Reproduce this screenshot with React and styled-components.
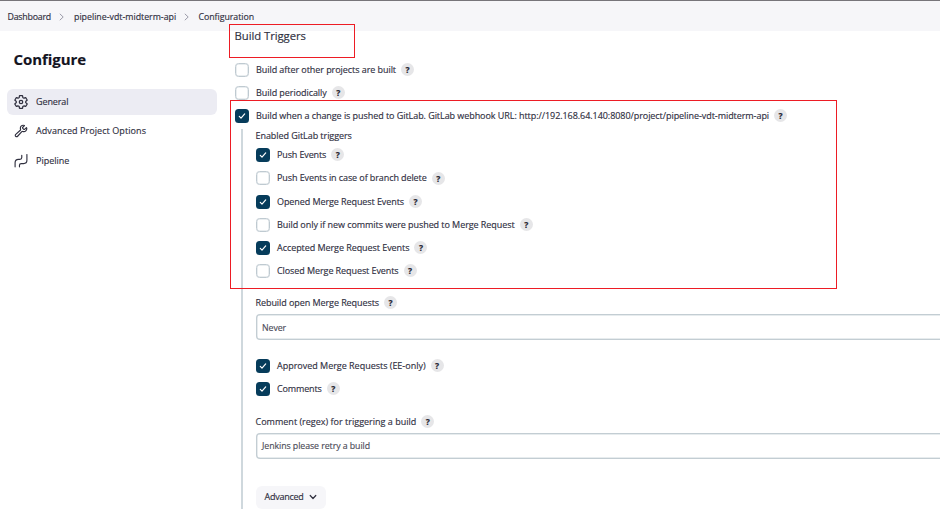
import React from "react";
import styled, { createGlobalStyle } from "styled-components";

const GlobalStyle = createGlobalStyle`
  * { box-sizing: border-box; }
  body {
    margin: 0;
    overflow: hidden;
    background: #fff;
    color: #30303f;
    font: 500 9px/12px "Open Sans", "Noto Sans", sans-serif;
    letter-spacing: -0.06px;
    -webkit-text-stroke: 0.15px;
  }
`;

const Page = styled.div`
  position: relative;
  width: 940px;
  height: 512px;
  overflow: hidden;
`;

const Header = styled.nav`
  display: flex;
  align-items: center;
  height: 31px;
  padding: 2px 7.5px 0;
  border-top: 1px solid #77757a;
  background: #f6f6f9;
`;

const Crumb = styled.span`
  width: ${(p) => p.$width}px;
  white-space: nowrap;
  font-size: 8.8px;
  letter-spacing: ${(p) => p.$spacing}px;
`;

const CrumbArrow = styled.svg`
  width: 5px;
  height: 8px;
  margin: 0 ${(p) => p.$after}px 0 8px;
  fill: none;
  stroke: #9c9caa;
  stroke-width: 1;
`;

const Body = styled.div`
  display: flex;
  height: 481px;
`;

const Sidebar = styled.aside`
  flex: none;
  width: 234.5px;
  padding: 17px 18px 0 6.5px;
`;

const SidebarTitle = styled.h1`
  margin: 0 0 19px 7px;
  color: #14141f;
  font-size: 15px;
  line-height: 22px;
  font-weight: 700;
  letter-spacing: -0.05px;
`;

const NavItem = styled.a`
  display: flex;
  align-items: center;
  width: 210px;
  height: 26px;
  margin-bottom: 3.4px;
  padding-left: 7px;
  gap: 8.5px;
  border-radius: 6px;
  background: ${(p) => (p.$active ? "#ececf3" : "transparent")};
  letter-spacing: ${(p) => p.$spacing || 0}px;
`;

const NavIcon = styled.svg`
  width: 14px;
  height: 14px;
  fill: none;
  stroke: #30303f;
  stroke-width: 42;
  stroke-linecap: round;
  stroke-linejoin: round;
`;

const Main = styled.main`
  flex: 1;
  min-width: 0;
`;

const SectionTitle = styled.h2`
  margin: 0;
  height: 27px;
  font-size: 11.3px;
  line-height: 10px;
  font-weight: 500;
  letter-spacing: -0.05px;
`;

const Row = styled.div`
  display: flex;
  align-items: center;
  height: ${(p) => p.$height || 23.15}px;
  white-space: nowrap;
  letter-spacing: ${(p) => p.$spacing ?? -0.06}px;
`;

const Box = styled.span`
  display: flex;
  align-items: center;
  justify-content: center;
  flex: none;
  width: 14px;
  height: 14px;
  margin-right: 7.5px;
  border-radius: 3.5px;
  border: ${(p) => (p.$checked ? "0" : "1px solid #bfcad1")};
  box-shadow: ${(p) => (p.$checked ? "none" : "inset 0 0 0 0.5px #d5dde1")};
  background: ${(p) => (p.$checked ? "#063c5b" : "#fff")};

  svg {
    width: 8px;
    height: 8px;
    fill: none;
    stroke: #fff;
    stroke-width: 1.2;
    stroke-linecap: round;
    stroke-linejoin: round;
  }
`;

const HelpBadge = styled.span`
  display: flex;
  align-items: center;
  justify-content: center;
  flex: none;
  width: 13px;
  height: 13px;
  margin: -0.6px 0 0 5px;
  border-radius: 50%;
  background: #e6e6e8;
  color: #22222e;
  font-size: 8.5px;
  font-weight: 700;
  line-height: 13px;
`;

const Nested = styled.div`
  height: 380px;
  margin: 1.5px 0 0 6.5px;
  padding-left: 12.5px;
  border-left: 2px solid #cfd8dd;
`;

const GroupLabel = styled.div`
  height: 14.8px;
  line-height: 14px;
  white-space: nowrap;
`;

const Field = styled.div`
  display: flex;
  align-items: center;
  height: 26px;
  padding: 1px 0 0 5.5px;
  border: solid #c3cdd3;
  border-width: 1px 0 1px 1px;
  box-shadow: inset 0.5px 0 0 #d0d9dd, inset 0 -0.5px 0 #d0d9dd, inset 0 0.5px 0 #d0d9dd;
  border-radius: 4px 0 0 4px;
  color: #4c4c58;
  font-size: 8.8px;
  font-weight: 400;
  letter-spacing: -0.07px;
`;

const Group = styled.section`
  margin-top: ${(p) => p.$top}px;
`;

const AdvancedButton = styled.button`
  display: flex;
  align-items: center;
  width: 70px;
  height: 23px;
  margin-top: 27px;
  padding: 0 0 0 9px;
  gap: 5px;
  border: 0;
  border-radius: 6px;
  background: #f6f6f9;
  color: inherit;
  font: inherit;
  letter-spacing: -0.25px;

  svg {
    width: 8px;
    height: 8px;
    fill: none;
    stroke: #30303f;
    stroke-width: 1.2;
    stroke-linecap: round;
    stroke-linejoin: round;
  }
`;

const Highlight = styled.div`
  position: absolute;
  left: ${(p) => p.$x}px;
  top: ${(p) => p.$y}px;
  width: ${(p) => p.$width}px;
  height: ${(p) => p.$height}px;
  border: 1px solid #ed1c24;
  pointer-events: none;
`;

const Help = () => <HelpBadge>?</HelpBadge>;

const Separator = ({ after }) => (
  <CrumbArrow viewBox="0 0 5 8" $after={after}>
    <path d="M.8.8 4.2 4 .8 7.2" />
  </CrumbArrow>
);

const CheckRow = ({ label, checked, height, spacing }) => (
  <Row $height={height} $spacing={spacing}>
    <Box $checked={checked}>
      {checked && (
        <svg viewBox="0 0 8 8">
          <path d="M1.3 4.4 3 6.1 6.7 1.9" />
        </svg>
      )}
    </Box>
    {label}
    <Help />
  </Row>
);

const EVENTS = [
  { label: "Push Events", checked: true, spacing: -0.13 },
  { label: "Push Events in case of branch delete", spacing: -0.09 },
  { label: "Opened Merge Request Events", checked: true, spacing: -0.08 },
  { label: "Build only if new commits were pushed to Merge Request" },
  { label: "Accepted Merge Request Events", checked: true },
  { label: "Closed Merge Request Events", spacing: -0.08 },
];

export default function App() {
  return (
    <Page>
      <GlobalStyle />
      <Header>
        <Crumb $width={43.5} $spacing={-0.21}>Dashboard</Crumb>
        <Separator after={10} />
        <Crumb $width={102} $spacing={0}>pipeline-vdt-midterm-api</Crumb>
        <Separator after={9.5} />
        <Crumb $width={56} $spacing={-0.04}>Configuration</Crumb>
      </Header>
      <Body>
        <Sidebar>
          <SidebarTitle>Configure</SidebarTitle>
          <NavItem $active $spacing={-0.1}>
            <NavIcon viewBox="0 0 512 512">
              <g transform="translate(-20 -20) scale(1.08)">
                <circle cx="256" cy="256" r="58" />
                <path d="M416.39 256a154.34 154.34 0 01-1.53 20.79l45.21 35.46a10.81 10.81 0 012.45 13.75l-42.77 74a10.81 10.81 0 01-13.14 4.59l-44.9-18.08a16.11 16.11 0 00-15.17 1.75A164.48 164.48 0 01325 400.8a15.94 15.94 0 00-8.82 12.14l-6.73 47.89a11.08 11.08 0 01-10.68 9.17h-85.54a11.11 11.11 0 01-10.69-8.87l-6.72-47.82a16.07 16.07 0 00-9-12.22 155.3 155.3 0 01-21.46-12.57 16 16 0 00-15.11-1.71l-44.89 18.07a10.81 10.81 0 01-13.14-4.58l-42.77-74a10.8 10.8 0 012.45-13.75l38.21-30a16.05 16.05 0 006-14.08c-.36-4.17-.58-8.33-.58-12.5s.21-8.27.58-12.35a16 16 0 00-6.07-13.94l-38.19-30A10.81 10.81 0 0149.48 186l42.77-74a10.81 10.81 0 0113.14-4.59l44.9 18.08a16.11 16.11 0 0015.17-1.75A164.48 164.48 0 01187 111.2a15.94 15.94 0 008.82-12.14l6.73-47.89A11.08 11.08 0 01213.23 42h85.54a11.11 11.11 0 0110.69 8.87l6.72 47.82a16.07 16.07 0 009 12.22 155.3 155.3 0 0121.46 12.57 16 16 0 0015.11 1.71l44.89-18.07a10.81 10.81 0 0113.14 4.58l42.77 74a10.8 10.8 0 01-2.45 13.75l-38.21 30a16.05 16.05 0 00-6.05 14.08c.33 4.14.55 8.3.55 12.47z" />
              </g>
            </NavIcon>
            General
          </NavItem>
          <NavItem $spacing={0.07}>
            <NavIcon viewBox="0 0 512 512">
              <path d="M393.87 190a32.1 32.1 0 01-45.25 0l-26.57-26.57a32.09 32.09 0 010-45.26L382.19 58a1 1 0 00-.3-1.64c-38.82-16.64-89.15-8.16-121.11 23.57-30.58 30.35-32.32 76-21.12 115.84a31.93 31.93 0 01-9.06 32.08L64 380a48.17 48.17 0 1068 68l153.86-167a31.93 31.93 0 0131.6-9.13c39.54 10.59 84.54 8.6 114.72-21.19 32.49-32 39.5-88.56 23.75-120.93a1 1 0 00-1.6-.26z" />
            </NavIcon>
            Advanced Project Options
          </NavItem>
          <NavItem>
            <NavIcon viewBox="0 0 512 512">
              <path d="M40 470V320q0-122 122-122h52q70 0 70-70V50M200 470v-56q0-64 64-64h88q120 0 120-120V20" />
            </NavIcon>
            Pipeline
          </NavItem>
        </Sidebar>
        <Main>
          <SectionTitle>Build Triggers</SectionTitle>
          <CheckRow label="Build after other projects are built" />
          <CheckRow label="Build periodically" />
          <CheckRow
            label="Build when a change is pushed to GitLab. GitLab webhook URL: http://192.168.64.140:8080/project/pipeline-vdt-midterm-api"
            checked
          />
          <Nested>
            <GroupLabel>Enabled GitLab triggers</GroupLabel>
            {EVENTS.map((event) => (
              <CheckRow key={event.label} {...event} />
            ))}
            <Group $top={9.6}>
              <Row $height={22} $spacing={-0.07}>
                Rebuild open Merge Requests
                <Help />
              </Row>
              <Field>Never</Field>
            </Group>
            <Group $top={13.9}>
              <CheckRow label="Approved Merge Requests (EE-only)" checked spacing={-0.015} />
              <CheckRow label="Comments" checked spacing={-0.15} />
            </Group>
            <Group $top={10.5}>
              <Row $height={22} $spacing={0.01}>
                Comment (regex) for triggering a build
                <Help />
              </Row>
              <Field>Jenkins please retry a build</Field>
            </Group>
            <AdvancedButton>
              Advanced
              <svg viewBox="0 0 8 8">
                <path d="m1.2 2.5 2.8 3 2.8-3" />
              </svg>
            </AdvancedButton>
          </Nested>
        </Main>
      </Body>
      <Highlight $x={229} $y={24} $width={126} $height={34} />
      <Highlight $x={230} $y={100} $width={607} $height={189} />
    </Page>
  );
}
